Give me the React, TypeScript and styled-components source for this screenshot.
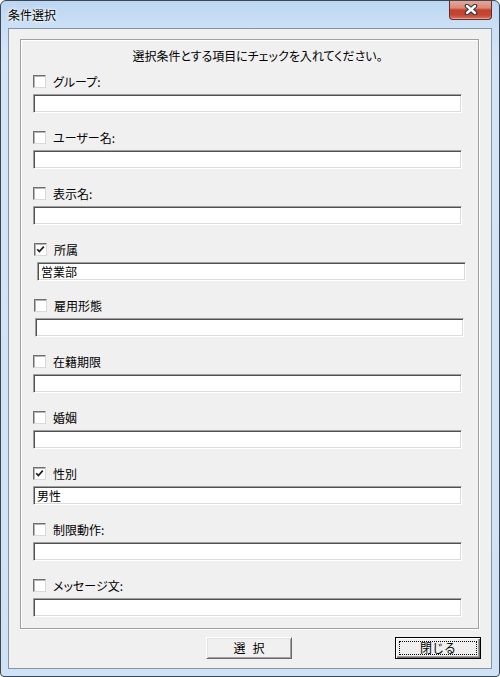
import React from "react";
import styled, { createGlobalStyle } from "styled-components";

const GlobalStyle = createGlobalStyle`
  html, body {
    margin: 0;
    padding: 0;
    background: #ffffff;
  }
  body {
    font-family: "Noto Sans CJK JP", "Noto Sans", sans-serif;
    font-size: 12px;
    color: #000;
  }
  * {
    box-sizing: border-box;
  }
`;

type Field = {
  label: string;
  checked: boolean;
  value: string;
  shift?: number;
};

const fields: Field[] = [
  { label: "グループ:", checked: false, value: "" },
  { label: "ユーザー名:", checked: false, value: "" },
  { label: "表示名:", checked: false, value: "" },
  { label: "所属", checked: true, value: "営業部", shift: 4 },
  { label: "雇用形態", checked: false, value: "", shift: 2 },
  { label: "在籍期限", checked: false, value: "" },
  { label: "婚姻", checked: false, value: "" },
  { label: "性別", checked: true, value: "男性" },
  { label: "制限動作:", checked: false, value: "" },
  { label: "メッセージ文:", checked: false, value: "" },
];

const App = () => {
  return (
    <>
      <GlobalStyle />
      <Window>
        <TitleBar>
          <Title>条件選択</Title>
          <CloseButton>
            <svg width="14" height="11" viewBox="0 0 14 11">
              <path d="M3 2 L11 9 M11 2 L3 9" stroke="#2f3640" strokeWidth="4.6" strokeLinecap="round" />
              <path d="M3 2 L11 9 M11 2 L3 9" stroke="#ffffff" strokeWidth="2.4" strokeLinecap="round" />
            </svg>
          </CloseButton>
        </TitleBar>

        <Client>
          <GroupBox>
            <Heading>選択条件とする項目にチェックを入れてください。</Heading>
            {fields.map((f) => (
              <Row key={f.label}>
                <LabelLine $shift={f.shift ?? 0}>
                  <CheckBox>
                    {f.checked && (
                      <svg width="9" height="9" viewBox="0 0 9 9">
                        <path d="M1.2 4.2 L3.4 6.6 L7.8 1.6" stroke="#1e1e1e" strokeWidth="1.7" fill="none" />
                      </svg>
                    )}
                  </CheckBox>
                  <Label>{f.label}</Label>
                </LabelLine>
                <TextBox $shift={f.shift ?? 0} value={f.value} readOnly />
              </Row>
            ))}
          </GroupBox>

          <ButtonRow>
            <PushButton>
              <ButtonText $spread={7}>選択</ButtonText>
            </PushButton>
            <PushButton $default>
              <ButtonText $spread={0}>閉じる</ButtonText>
            </PushButton>
          </ButtonRow>
        </Client>
      </Window>
    </>
  );
};

export default App;

const Window = styled.div`
  width: 500px;
  height: 677px;
  display: flex;
  flex-direction: column;
  border: 1px solid #3b4756;
  border-radius: 6px 6px 4px 4px;
  background: linear-gradient(180deg, #bcd6f1 0px, #cadff5 24px, #d3e5f8 60px, #cfe2f6 100%);
  overflow: hidden;
`;

const TitleBar = styled.div`
  height: 28px;
  display: flex;
  align-items: flex-start;
  padding-left: 7px;
`;

const Title = styled.div`
  margin-top: 6px;
  line-height: 16px;
  font-size: 12px;
  color: #000;
  text-shadow: 0 0 5px #ffffff, 0 0 3px #ffffff;
`;

const CloseButton = styled.div`
  margin-left: auto;
  margin-right: 7px;
  margin-top: -1px;
  width: 43px;
  height: 20px;
  display: flex;
  align-items: center;
  justify-content: center;
  border: 1px solid #6a2b22;
  border-top: none;
  border-radius: 0 0 4px 4px;
  background: linear-gradient(180deg, #e9ab9c 0%, #d88a78 42%, #c5402e 52%, #c44634 78%, #d7735e 100%);
  box-shadow: inset 0 -1px 0 rgba(255, 255, 255, 0.35);
`;

const Client = styled.div`
  flex: 1;
  margin: 0 7px 7px 7px;
  border: 1px solid #8394a7;
  background: #f0f0f0;
  padding: 10px 12px 9px 11px;
  display: flex;
  flex-direction: column;
`;

const GroupBox = styled.div`
  height: 590px;
  width: 459px;
  border: 1px solid #a0a0a0;
  box-shadow: inset 1px 1px 0 #ffffff, 1px 1px 0 #ffffff;
  padding: 8px 0 0 12px;
  display: flex;
  flex-direction: column;
`;

const Heading = styled.div`
  line-height: 16px;
  height: 16px;
  text-align: center;
  padding-left: 4px;
  margin-bottom: 11px;
  font-feature-settings: "palt";
`;

const Row = styled.div`
  display: flex;
  flex-direction: column;
  margin-bottom: 18px;
`;

const LabelLine = styled.div<{ $shift: number }>`
  height: 13px;
  display: flex;
  align-items: center;
  margin-left: ${(p) => Math.min(p.$shift, 1)}px;
`;

const CheckBox = styled.div`
  width: 13px;
  height: 13px;
  flex: none;
  background: #ffffff;
  border: 1px solid;
  border-color: #6e6e6e #d9d9d9 #d9d9d9 #6e6e6e;
  box-shadow: inset 1px 1px 0 #b4b4b4;
  display: flex;
  align-items: center;
  justify-content: center;
`;

const Label = styled.span`
  margin-left: 7px;
  line-height: 13px;
  font-size: 12px;
  font-feature-settings: "palt";
`;

const TextBox = styled.input<{ $shift: number }>`
  margin: 6px 0 0 ${(p) => p.$shift}px;
  width: 429px;
  height: 19px;
  padding: 0 3px;
  border: 1px solid;
  border-color: #a0a0a0 #ffffff #ffffff #a0a0a0;
  box-shadow: inset 1px 1px 0 #505050, inset -1px -1px 0 #dcdcdc;
  background: #ffffff;
  font-family: "Noto Sans CJK JP", "Noto Sans", sans-serif;
  font-size: 12px;
  color: #000;
  outline: none;
`;

const ButtonRow = styled.div`
  margin-top: 8px;
  margin-right: -2px;
  display: flex;
  justify-content: flex-end;
  gap: 103px;
`;

const PushButton = styled.div<{ $default?: boolean }>`
  position: relative;
  width: 86px;
  height: 22px;
  display: flex;
  align-items: center;
  justify-content: center;
  font-size: 12px;
  background: #f0f0f0;
  border: 1px solid;
  border-color: ${(p) => (p.$default ? "#000 #000 #000 #000" : "#ffffff #696969 #696969 #ffffff")};
  box-shadow: ${(p) =>
    p.$default
      ? "inset 1px 1px 0 #ffffff, inset -1px -1px 0 #696969, inset -2px -2px 0 #a0a0a0"
      : "inset 1px 1px 0 #e3e3e3, inset -1px -1px 0 #a0a0a0"};
  &::after {
    content: "";
    display: ${(p) => (p.$default ? "block" : "none")};
    position: absolute;
    inset: 3px;
    border: 1px dotted #000;
  }
`;

const ButtonText = styled.span<{ $spread: number }>`
  letter-spacing: ${(p) => p.$spread}px;
  padding-left: ${(p) => p.$spread}px;
  line-height: 14px;
`;
